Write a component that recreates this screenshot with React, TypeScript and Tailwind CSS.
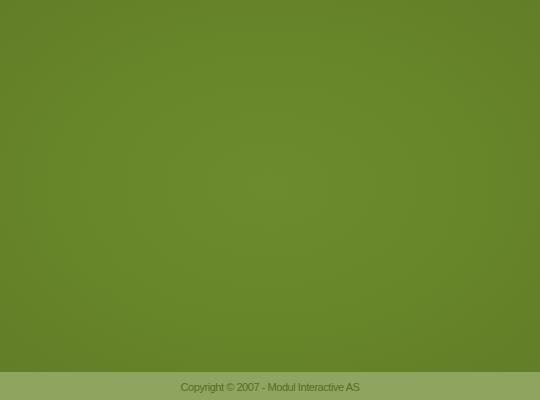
export default function App() {
  return (
    <div className="flex h-[400px] w-[540px] flex-col bg-[#658129] font-['Liberation_Sans',Arial,sans-serif]">
      <div className="flex-1 bg-[radial-gradient(ellipse_at_center,#6c8b2f_0%,#678529_55%,#627e28_100%)]" />
      <div className="flex h-[28px] items-center justify-center bg-[#8fa55f] pt-[3px] text-[11px] tracking-[-0.45px] text-[#566c2a]">
        Copyright © 2007 - Modul Interactive AS
      </div>
    </div>
  );
}
